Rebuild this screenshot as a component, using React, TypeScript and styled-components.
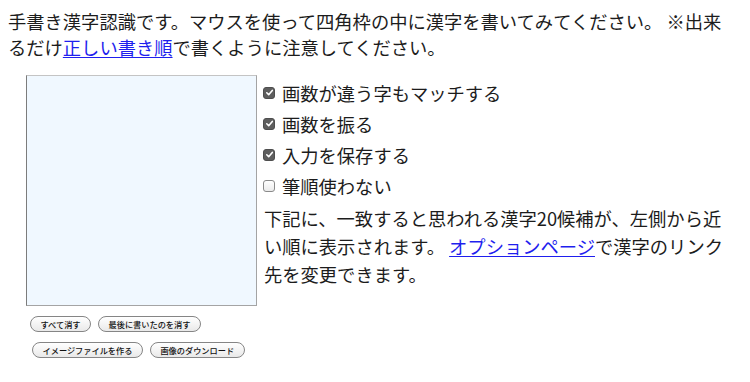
import styled, { createGlobalStyle } from "styled-components";

const GlobalStyle = createGlobalStyle`
  body {
    margin: 8px;
    background: #ffffff;
    color: #1c1c1c;
    font-family: "Noto Sans CJK JP", "Noto Sans", sans-serif;
    font-size: 18.3px;
  }
`;

const options = [
  { label: "画数が違う字もマッチする", checked: true },
  { label: "画数を振る", checked: true },
  { label: "入力を保存する", checked: true },
  { label: "筆順使わない", checked: false },
];

const Check = ({ checked }: { checked: boolean }) => (
  <Box $checked={checked}>
    {checked && (
      <svg width="11" height="11" viewBox="0 0 11 11">
        <path d="M2.8 5.8 L4.7 7.7 L8.3 3.4" fill="none" stroke="#fff" strokeWidth="1.6" strokeLinecap="round" strokeLinejoin="round" />
      </svg>
    )}
  </Box>
);

const App = () => {
  return (
    <>
      <GlobalStyle />
      <Intro>
        手書き漢字認識です。マウスを使って四角枠の中に漢字を書いてみてください。 ※出来るだけ
        <Link href="#">正しい書き順</Link>で書くように注意してください。
      </Intro>

      <Main>
        <Left>
          <Canvas />
          <ButtonRow>
            <Btn>すべて消す</Btn>
            <Btn>最後に書いたのを消す</Btn>
          </ButtonRow>
          <ButtonRow $indent={2}>
            <Btn>イメージファイルを作る</Btn>
            <Btn>画像のダウンロード</Btn>
          </ButtonRow>
        </Left>

        <Right>
          {options.map((o) => (
            <OptionRow key={o.label}>
              <Check checked={o.checked} />
              {o.label}
            </OptionRow>
          ))}
          <Note>
            下記に、一致すると思われる漢字20候補が、左側から近い順に表示されます。 <Link href="#">オプションページ</Link>で漢字のリンク先を変更できます。
          </Note>
        </Right>
      </Main>
    </>
  );
};

export default App;

const Intro = styled.p`
  margin: 0;
  max-width: 726px;
  line-height: 26px;
`;

const Link = styled.a`
  color: #1f1fee;
  text-decoration: underline;
  text-underline-offset: 2px;
`;

const Main = styled.div`
  display: flex;
  align-items: flex-start;
  margin-top: 15px;
`;

const Left = styled.div`
  display: flex;
  flex-direction: column;
  padding-left: 18px;
`;

const Canvas = styled.div`
  width: 229px;
  height: 229px;
  background: #f0f8ff;
  border-style: solid;
  border-width: 1px;
  border-color: #c4c4c4 #a4a4a4 #a4a4a4 #7c7c7c;
`;

const ButtonRow = styled.div<{ $indent?: number }>`
  display: flex;
  gap: 7px;
  margin-top: 10px;
  padding-left: ${(p) => 4 + (p.$indent ?? 0)}px;
`;

const Btn = styled.button`
  height: 16px;
  padding: 0 9.5px;
  border: 1px solid #858585;
  border-radius: 8px;
  background: linear-gradient(#ffffff, #e9e9e9);
  color: #111;
  font-family: "Noto Sans CJK JP", sans-serif;
  font-size: 8.2px;
  font-weight: 500;
  line-height: 14px;
  white-space: nowrap;
`;

const Right = styled.div`
  width: 472px;
  margin-left: 7px;
  padding-top: 2px;
`;

const OptionRow = styled.div`
  display: flex;
  align-items: center;
  gap: 7px;
  height: 31px;
`;

const Box = styled.span<{ $checked: boolean }>`
  display: inline-flex;
  width: 12px;
  height: 12px;
  box-sizing: border-box;
  border-radius: 3px;
  margin-left: -1px;
  background: ${(p) => (p.$checked ? "#5e5e5e" : "linear-gradient(#ffffff, #ebebeb)")};
  border: 1px solid ${(p) => (p.$checked ? "#4e4e4e" : "#8a8a8a")};
  align-items: center;
  justify-content: center;
  svg {
    margin: -1px;
  }
`;

const Note = styled.p`
  margin: 3px 0 0;
  line-height: 28px;
`;
